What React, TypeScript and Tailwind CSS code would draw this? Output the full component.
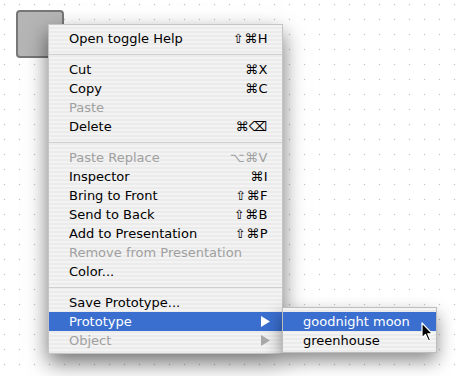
import React from 'react';

type Item =
  | { kind: 'sep' }
  | { kind: 'item'; label: string; keys?: string; disabled?: boolean; sub?: boolean; active?: boolean };

const items: Item[] = [
  { kind: 'item', label: 'Open toggle Help', keys: '⇧⌘H' },
  { kind: 'sep' },
  { kind: 'item', label: 'Cut', keys: '⌘X' },
  { kind: 'item', label: 'Copy', keys: '⌘C' },
  { kind: 'item', label: 'Paste', disabled: true },
  { kind: 'item', label: 'Delete', keys: '⌘⌫' },
  { kind: 'sep' },
  { kind: 'item', label: 'Paste Replace', keys: '⌥⌘V', disabled: true },
  { kind: 'item', label: 'Inspector', keys: '⌘I' },
  { kind: 'item', label: 'Bring to Front', keys: '⇧⌘F' },
  { kind: 'item', label: 'Send to Back', keys: '⇧⌘B' },
  { kind: 'item', label: 'Add to Presentation', keys: '⇧⌘P' },
  { kind: 'item', label: 'Remove from Presentation', disabled: true },
  { kind: 'item', label: 'Color...' },
  { kind: 'sep' },
  { kind: 'item', label: 'Save Prototype...' },
  { kind: 'item', label: 'Prototype', sub: true, active: true },
  { kind: 'item', label: 'Object', sub: true, disabled: true },
];

const stripes =
  'bg-[repeating-linear-gradient(to_bottom,#f3f3f3_0px,#f3f3f3_2px,#ebebeb_2px,#ebebeb_4px)]';

const Arrow = ({ color }: { color: string }) => (
  <svg width="9" height="11" viewBox="0 0 9 11" className="shrink-0">
    <path d="M0 0 L9 5.5 L0 11 Z" fill={color} />
  </svg>
);

const Cursor = () => (
  <svg width="14" height="21" viewBox="0 0 14 21" className="absolute left-[421px] top-[322px]">
    <path d="M1 1 L1 16 L4.5 12.5 L7.5 19 L9.5 18 L6.8 11.8 L11.5 11.8 Z" fill="#000" stroke="#fff" strokeWidth="1.2" strokeLinejoin="round" />
  </svg>
);

const SubMenu = () => (
  <div className={`absolute left-[233px] top-[-5px] w-[155px] pt-[4px] pb-[2px] border border-[#bdbdbd] ${stripes} shadow-[0_8px_18px_rgba(0,0,0,0.45)]`}>
    <div className="h-[19px] flex items-center pl-[20px] bg-[#3a6fd0] text-white">goodnight moon</div>
    <div className="h-[19px] flex items-center pl-[20px] text-black">greenhouse</div>
  </div>
);

export default function App() {
  return (
    <div
      className="relative w-[456px] h-[376px] overflow-hidden bg-white bg-[radial-gradient(circle_at_4.5px_4.5px,#c4c4c4_0.7px,transparent_1.05px)] bg-[length:15px_15px]"
      style={{ fontFamily: '"DejaVu Sans", "Liberation Sans", sans-serif' }}
    >
      {/* shape on the canvas */}
      <div className="absolute left-[16px] top-[10px] w-[48px] h-[48px] rounded-[4px] border-2 border-[#777] bg-[#b5b5b5]" />

      {/* context menu */}
      <div className={`absolute left-[48px] top-[24px] w-[235px] pt-[4px] pb-[3px] border border-[#c4c4c4] ${stripes} shadow-[0_9px_20px_rgba(0,0,0,0.55)] text-[13px] leading-none`}>
        {items.map((it, i) =>
          it.kind === 'sep' ? (
            <div key={i} className="h-[12px] flex items-center">
              <div className="w-full h-px bg-[#cfcfcf]" />
            </div>
          ) : (
            <div
              key={i}
              className={`relative h-[19px] flex items-center justify-between pl-[20px] ${it.sub ? 'pr-[12px]' : 'pr-[14px]'} ${
                it.active ? 'bg-[#3a6fd0] text-white' : it.disabled ? 'text-[#a0a0a0]' : 'text-black'
              }`}
            >
              <span>{it.label}</span>
              {it.keys && <span className="tracking-[0.5px]">{it.keys}</span>}
              {it.sub && <Arrow color={it.active ? '#fff' : '#a8a8a8'} />}
              {it.active && <SubMenu />}
            </div>
          )
        )}
      </div>

      <Cursor />
    </div>
  );
}
